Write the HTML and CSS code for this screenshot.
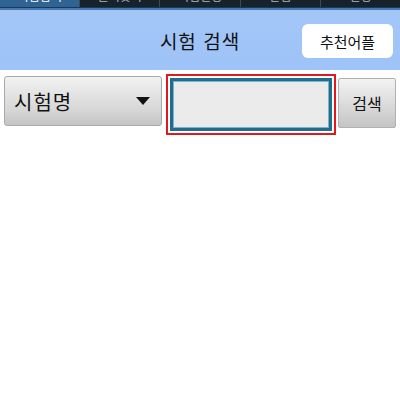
FILE: index.html
```html
<!DOCTYPE html>
<html lang="ko">
<head>
<meta charset="utf-8">
<link rel="stylesheet" href="styles.css">
</head>
<body>
<div class="tabs">
  <div class="tab active"><span>시험검색</span></div>
  <div class="tab"><span>즐겨찾기</span></div>
  <div class="tab"><span>시험일정</span></div>
  <div class="tab"><span>알림</span></div>
  <div class="tab"><span>설정</span></div>
</div>
<div class="rule-dark"></div>
<div class="rule-blue"></div>
<header class="header">
  <h1 class="title">시험 검색</h1>
  <button class="rec">추천어플</button>
</header>
<div class="search-row">
  <div class="select">
    <span class="select-label">시험명</span>
    <span class="caret"></span>
  </div>
  <div class="field-outer">
    <div class="field"></div>
  </div>
  <button class="go">검색</button>
</div>
</body>
</html>
```
FILE: styles.css
```css
html, body {
  margin: 0;
  padding: 0;
  background: #ffffff;
  font-family: "Noto Sans CJK KR", "Noto Sans", sans-serif;
}
.tabs {
  display: flex;
  height: 7px;
  background: #17222c;
  overflow: hidden;
}
.tab {
  flex: 1;
  border-left: 1px solid #3a4a58;
  display: flex;
  justify-content: center;
  align-items: flex-end;
  color: #aab6c0;
  font-size: 12px;
  line-height: 12px;
}
.tab:first-child { border-left: none; }
.tab span { margin-bottom: 5px; }
.tab.active {
  background: #2e6394;
  color: #ffffff;
}
.rule-dark { height: 1px; background: #1d3956; }
.rule-blue { height: 2px; background: #4478b0; }
.header {
  height: 60px;
  background: linear-gradient(#a3c6f7, #9ec3f8);
  display: flex;
  align-items: center;
  justify-content: center;
  position: relative;
}
.title {
  margin: 0;
  font-size: 19px;
  font-weight: normal;
  color: #111111;
  letter-spacing: 1px;
}
.rec {
  position: absolute;
  right: 7px;
  top: 14px;
  width: 91px;
  height: 34px;
  border: none;
  border-radius: 6px;
  background: #ffffff;
  font-family: "Noto Sans CJK KR", sans-serif;
  font-size: 15px;
  color: #111111;
  padding: 0;
}
.search-row {
  display: flex;
  align-items: flex-start;
  padding: 4px 4px 0 4px;
}
.select {
  height: 48px;
  margin-top: 2px;
  border: 1px solid #a9a9a9;
  border-radius: 3px;
  background: linear-gradient(#f2f2f2, #d6d6d6 70%, #c4c4c4);
  display: flex;
  align-items: center;
  justify-content: space-between;
  padding: 0 11px 0 9px;
  width: 136px;
}
.select-label {
  font-size: 20px;
  color: #111111;
  letter-spacing: 1px;
}
.caret {
  width: 0;
  height: 0;
  border-left: 7px solid transparent;
  border-right: 7px solid transparent;
  border-top: 8px solid #111111;
}
.field-outer {
  margin-left: 4px;
  width: 162px;
  height: 53px;
  border: 2px solid #e0191f;
  background: #ffffff;
  padding: 2px;
}
.field {
  height: 47px;
  border: 3px solid #1f6e90;
  outline: 1px solid #7fb3c9;
  outline-offset: -4px;
  background: #ebebeb;
}
.go {
  margin-left: 2px;
  margin-top: 4px;
  width: 58px;
  height: 50px;
  border: 1px solid #b0b0b0;
  border-radius: 2px;
  background: linear-gradient(#f3f3f3, #d3d3d3 70%, #c4c4c4);
  font-family: "Noto Sans CJK KR", sans-serif;
  font-size: 16px;
  color: #111111;
  padding: 0;
}
```
